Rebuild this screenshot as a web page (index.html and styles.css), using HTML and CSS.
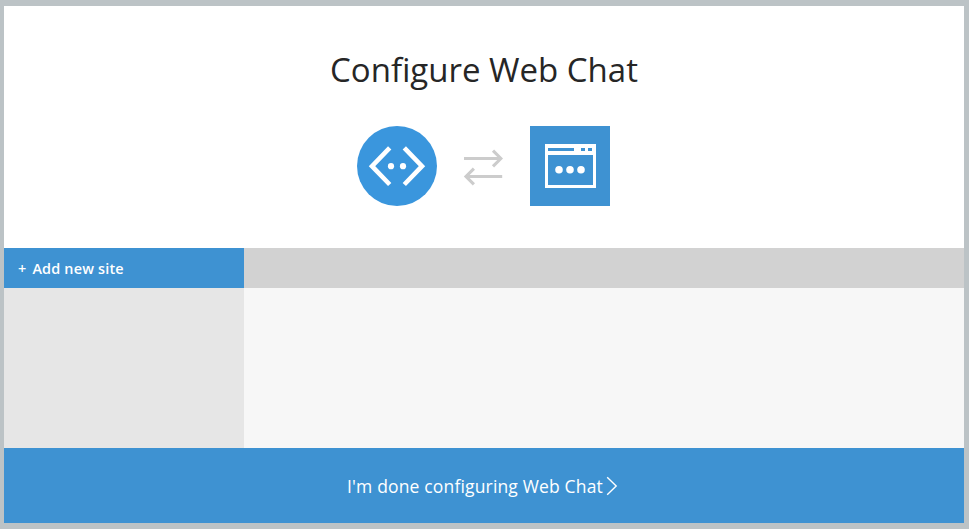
FILE: index.html
```html
<!DOCTYPE html>
<html lang="en">
<head>
<meta charset="utf-8">
<title>Configure Web Chat</title>
<link rel="stylesheet" href="styles.css">
</head>
<body>
<main class="panel">
  <header class="intro">
    <h1 class="title">Configure Web Chat</h1>
    <div class="icons">
      <svg class="bot" width="80" height="80" viewBox="0 0 80 80">
        <circle cx="40" cy="40" r="40" fill="#3a96dd"/>
        <path d="M32.7 21.8 L15 40.2 L32.7 58.5 M47.3 21.8 L65 40.2 L47.3 58.5" fill="none" stroke="#fff" stroke-width="4.6"/>
        <circle cx="34" cy="40.2" r="3.1" fill="#fff"/>
        <circle cx="46" cy="40.2" r="3.1" fill="#fff"/>
      </svg>
      <svg class="arrows" width="40" height="38" viewBox="0 0 40 38">
        <path d="M1 9.5 H37 M30 1.6 L37.9 9.5 L30 17.4 M39.2 27.5 H3 M10.9 19.6 L3 27.5 L10.9 35.4" fill="none" stroke="#ccc" stroke-width="3.1"/>
      </svg>
      <svg class="window" width="80" height="80" viewBox="0 0 80 80">
        <path d="M0 0H80V80H0Z" fill="#3e92d2"/>
        <path d="M15 18H66V62H15Z" fill="#fff"/>
        <path d="M18 22H44V25H18Z M51 22H55V25H51Z M58 22H62V25H58Z M18 29H63V59H18Z" fill="#3e92d2"/>
        <circle cx="29" cy="43.7" r="3.8" fill="#fff"/>
        <circle cx="40" cy="43.7" r="3.8" fill="#fff"/>
        <circle cx="51" cy="43.7" r="3.8" fill="#fff"/>
      </svg>
    </div>
  </header>
  <section class="sites">
    <div class="add">+ <span class="add-label">Add new site</span></div>
    <div class="bar"></div>
    <div class="list"></div>
    <div class="detail"></div>
  </section>
  <footer class="done">
    <span class="done-label">I'm done configuring Web Chat</span>
    <svg class="chevron" width="12" height="20" viewBox="0 0 12 20">
      <path d="M1.2 1.3 L10.2 10 L1.2 18.7" fill="none" stroke="#fff" stroke-width="1.4"/>
    </svg>
  </footer>
</main>
</body>
</html>
```
FILE: styles.css
```css
* { box-sizing: border-box; }
body {
  margin: 0;
  height: 529px;
  padding: 6px 5px 6px 4px;
  background: #bcc3c6;
  font-family: "Open Sans", "Noto Sans", sans-serif;
  overflow: hidden;
}
.panel { height: 517px; background: #fff; }
.intro { height: 242px; padding-top: 40px; }
.title {
  margin: 0;
  height: 48px;
  line-height: 48px;
  font-size: 33px;
  font-weight: 400;
  color: #262626;
  text-align: center;
  white-space: nowrap;
}
.icons {
  display: flex;
  justify-content: center;
  align-items: center;
  margin-top: 32px;
  padding-right: 1px;
}
.arrows { margin: 4px 27px 0 26px; }
.sites {
  display: grid;
  grid-template-columns: 240px 1fr;
  grid-template-rows: 40px 160px;
}
.add {
  background: #3e92d2;
  color: #fff;
  padding-left: 14px;
  font-size: 14.4px;
  font-weight: 600;
  letter-spacing: 0.2px;
  line-height: 41px;
  white-space: nowrap;
}
.add-label { margin-left: 2px; }
.bar { background: #d2d2d2; }
.list { background: #e6e6e6; }
.detail { background: #f7f7f7; }
.done {
  display: flex;
  justify-content: center;
  align-items: center;
  gap: 3px;
  height: 75px;
  padding-right: 3px;
  background: #3e92d2;
  color: #fff;
}
.done-label { font-size: 17.5px; letter-spacing: 0.16px; line-height: 24px; white-space: nowrap; }
```
